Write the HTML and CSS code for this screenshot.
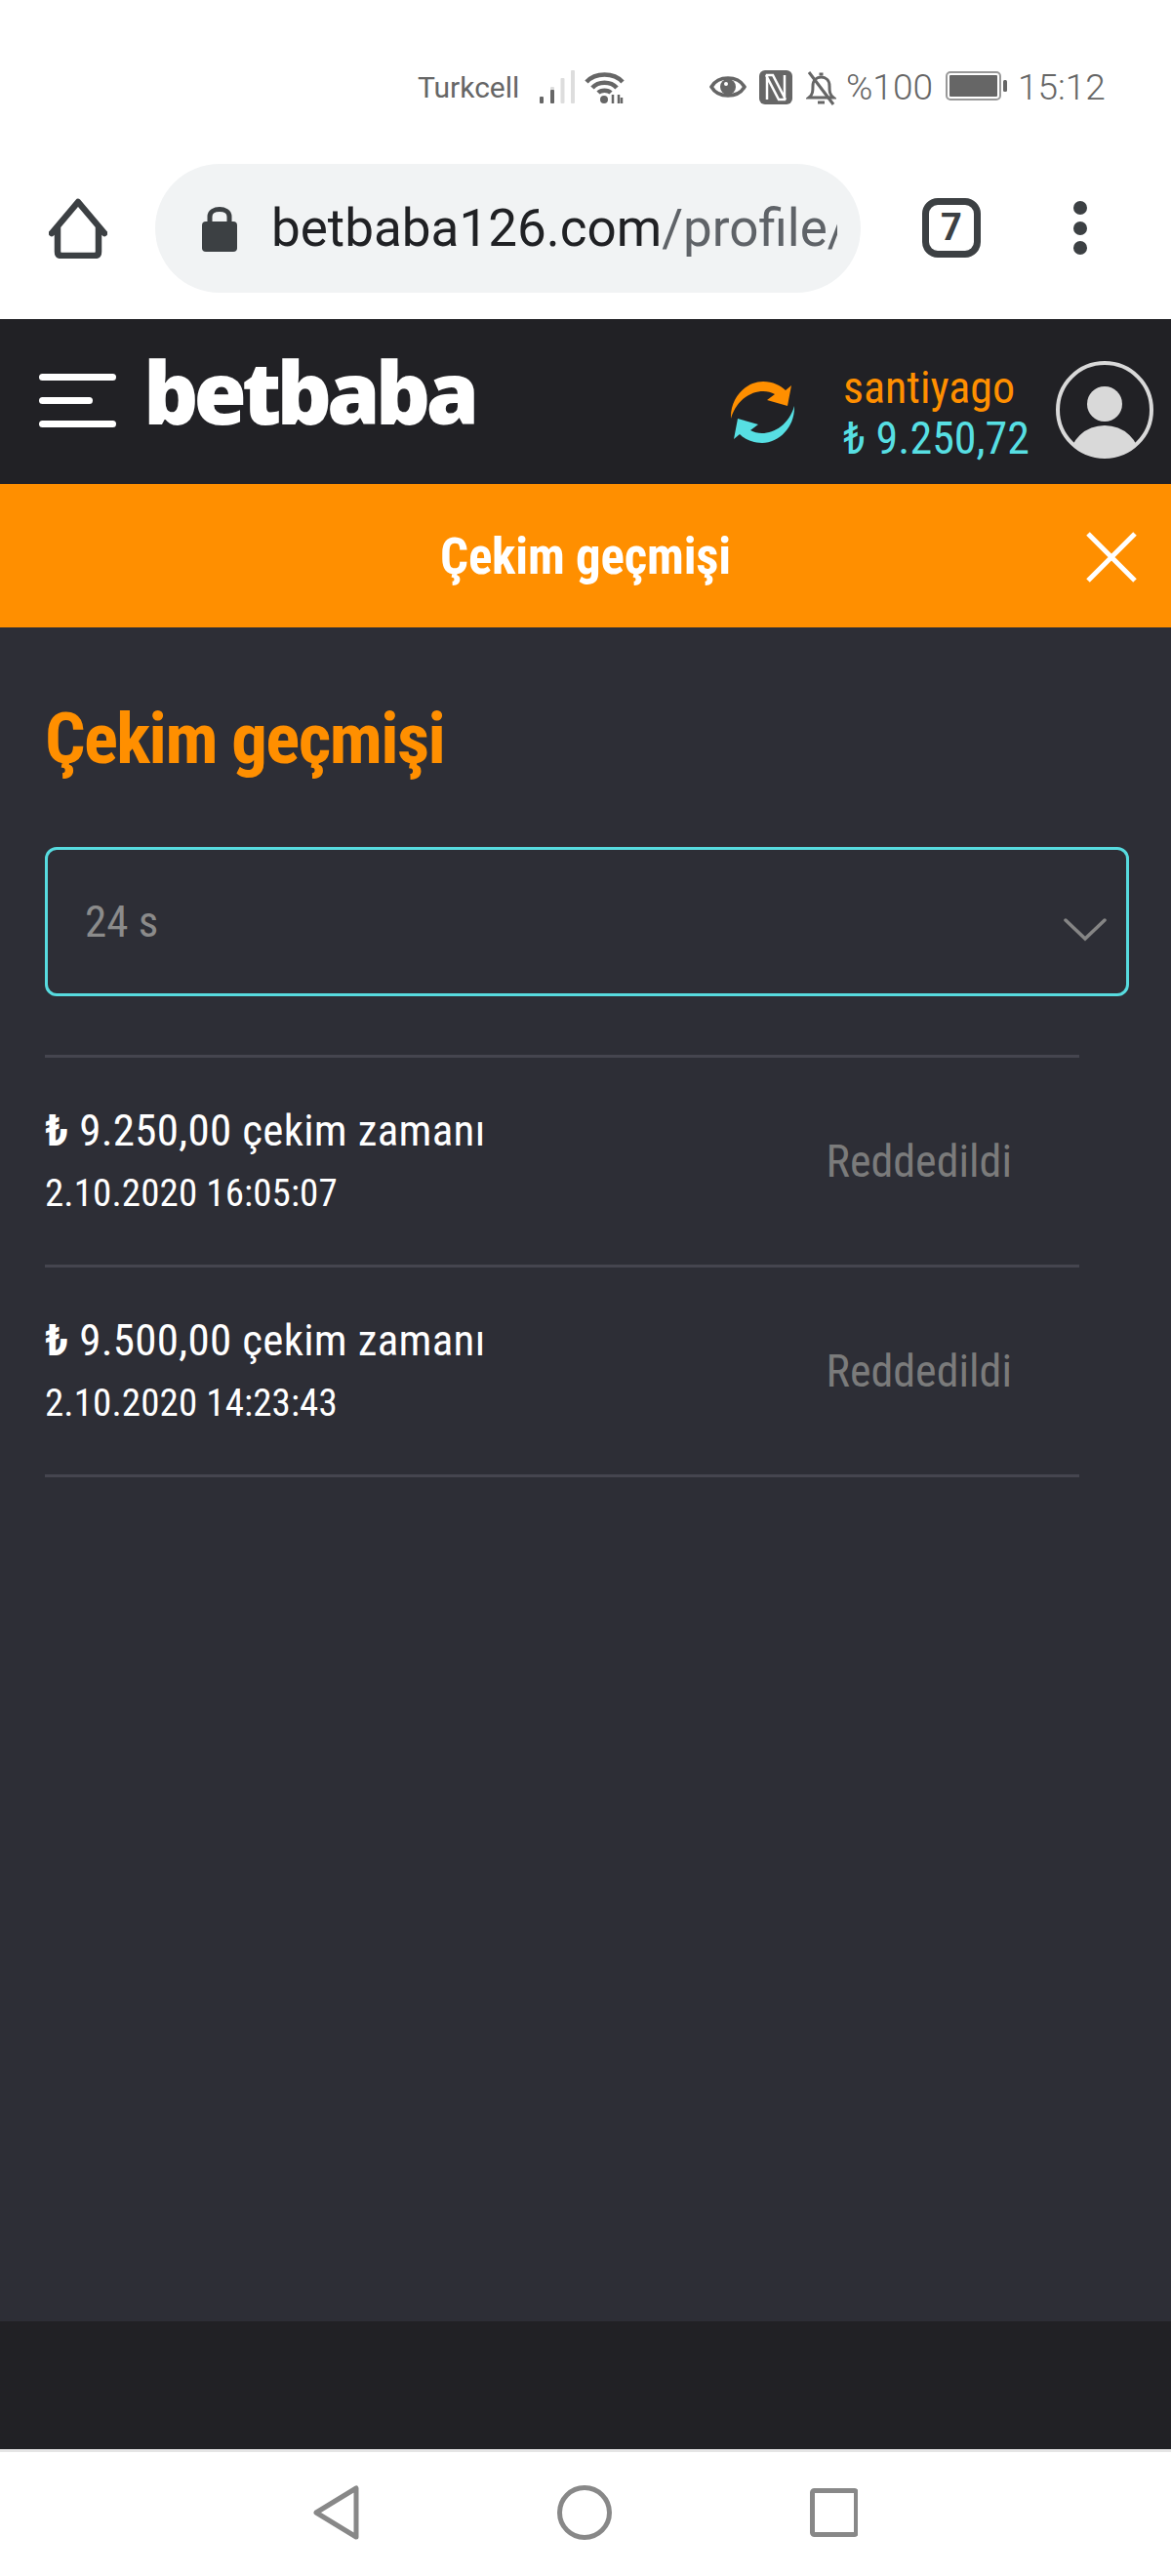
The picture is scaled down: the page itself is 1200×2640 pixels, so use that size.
FILE: index.html
```html
<!DOCTYPE html>
<html lang="en">
<head>
    <meta charset="UTF-8">
    <title>Çekim geçmişi</title>
    <link rel="stylesheet" href="styles.css">
</head>
<body>
    <div class="status-bar">
        <span class="carrier">Turkcell</span>
        <svg class="ic-signal" viewBox="0 0 36 34"><g fill="#ddd"><rect x="11" y="17" width="4" height="17" rx="1"/><rect x="21.500" y="8" width="4" height="26" rx="1"/><rect x="32" y="0" width="4" height="34" rx="1"/></g><rect x="0" y="27" width="4" height="7" rx="1" fill="#666"/><rect x="11" y="20" width="4" height="14" rx="1" fill="#666"/></svg>
        <svg class="ic-wifi" viewBox="0 0 41 33"><g fill="none" stroke="#666" stroke-width="4.500"><path d="M2 11C11 1 30 1 39 11"/><path d="M8 17C14 10 27 10 33 17"/><path d="M14 22C17 19 24 19 27 22"/></g><circle cx="20" cy="29" r="4" fill="#666"/><path d="M29 33V24M35 33V24M38 33V27" stroke="#666" stroke-width="2.500"/></svg>
        <svg class="ic-eye" viewBox="0 0 38 30"><path d="M2 15C9 3 29 3 36 15C29 27 9 27 2 15Z" fill="none" stroke="#666" stroke-width="3.500"/><circle cx="19" cy="15" r="8" fill="#666"/><circle cx="17" cy="12" r="2" fill="#fff"/></svg>
        <svg class="ic-nfc" viewBox="0 0 34 35"><rect width="34" height="35" rx="6" fill="#666"/><path d="M8 30V5H14L27 30M26 5V30H20L7 5" fill="none" stroke="#fff" stroke-width="2.500"/></svg>
        <svg class="ic-bell" viewBox="0 0 31 36"><path d="M3 28C7 25 7 21 7 16C7 10 11 7 15.500 7C20 7 24 10 24 16C24 21 24 25 28 28Z" fill="none" stroke="#666" stroke-width="3"/><path d="M12 33H19" stroke="#666" stroke-width="3"/><path d="M13.500 4H17.500M3 2L28 35" stroke="#666" stroke-width="3"/></svg>
        <span class="status-text">%100</span>
        <svg class="ic-battery" viewBox="0 0 64 30"><rect x="1" y="1" width="55" height="28" rx="4" fill="none" stroke="#999" stroke-width="2"/><rect x="4" y="4" width="49" height="22" rx="1" fill="#666"/><rect x="59" y="9" width="4" height="12" rx="1.500" fill="#666"/></svg>
        <span class="status-text">15:12</span>
    </div>

    <div class="toolbar">
        <svg class="ic-home" viewBox="0 0 60 62"><path d="M3 36L30 4L57 36M9 30V55Q9 59 13 59H47Q51 59 51 55V30" fill="none" stroke="#3c4043" stroke-width="6.500" stroke-linecap="round" stroke-linejoin="round"/></svg>
        <div class="url-pill">
            <svg class="ic-lock" viewBox="0 0 36 48"><path d="M8 20V12C8 2 28 2 28 12V20" fill="none" stroke="#3c4043" stroke-width="5"/><rect y="17" width="36" height="31" rx="4" fill="#3c4043"/></svg>
            <div class="url"><span class="url-host">betbaba126.com</span><span class="url-path">/profile/</span></div>
        </div>
        <div class="tab-count">7</div>
        <div class="dots"><i></i><i></i><i></i></div>
    </div>

    <header class="site-header">
        <div class="burger"><i></i><i class="short"></i><i></i></div>
        <div class="logo">betbaba</div>
        <svg class="ic-sync" viewBox="0 0 68 66">
            <path d="M1 39C0 18 16 1 34 1C44 1 52 5 57 10L63 5L59 26L38 20L46 14C32 6 8 14 1 39Z" fill="#ff8f00"/>
            <path d="M66 26C67 47 51 64 33 64C23 64 15 60 10 55L4 60L8 39L29 45L21 51C35 59 59 51 66 26Z" fill="#57dfe3"/>
        </svg>
        <div class="account">
            <div class="username">santiyago</div>
            <div class="balance">₺ 9.250,72</div>
        </div>
        <svg class="ic-avatar" viewBox="0 0 100 100"><defs><clipPath id="avatar-clip"><circle cx="50" cy="50" r="48"/></clipPath></defs><circle cx="50" cy="50" r="48" fill="none" stroke="#d9d9d9" stroke-width="4"/><circle cx="50" cy="44" r="18" fill="#d9d9d9"/><ellipse cx="50" cy="100" rx="36" ry="34" fill="#d9d9d9" clip-path="url(#avatar-clip)"/></svg>
    </header>

    <div class="title-bar">
        <span class="title-bar-text">Çekim geçmişi</span>
        <svg class="ic-close" viewBox="0 0 52 52"><path d="M2 2L50 50M50 2L2 50" stroke="#fff" stroke-width="5"/></svg>
    </div>

    <main class="content">
        <h1 class="page-title">Çekim geçmişi</h1>
        <div class="select">
            <span class="select-value">24 s</span>
            <svg class="ic-chevron" viewBox="0 0 44 24"><path d="M2 2L22 21L42 2" fill="none" stroke="#858585" stroke-width="3.500" stroke-linecap="round"/></svg>
        </div>
        <ul class="history">
            <li class="history-row">
                <div class="history-info">
                    <div class="history-amount"><b>₺</b> 9.250,00 çekim zamanı</div>
                    <div class="history-date">2.10.2020 16:05:07</div>
                </div>
                <div class="history-status">Reddedildi</div>
            </li>
            <li class="history-row">
                <div class="history-info">
                    <div class="history-amount"><b>₺</b> 9.500,00 çekim zamanı</div>
                    <div class="history-date">2.10.2020 14:23:43</div>
                </div>
                <div class="history-status">Reddedildi</div>
            </li>
        </ul>
    </main>

    <footer class="site-footer"></footer>

    <nav class="nav-bar">
        <svg class="ic-nav" viewBox="0 0 56 56"><path d="M5 28L46 3V53Z" fill="none" stroke="#888" stroke-width="5" stroke-linejoin="round"/></svg>
        <svg class="ic-nav" viewBox="0 0 56 56"><circle cx="28" cy="28" r="25.500" fill="none" stroke="#888" stroke-width="5"/></svg>
        <svg class="ic-nav" viewBox="0 0 56 56"><rect x="9.500" y="5.500" width="45" height="45" rx="2" fill="none" stroke="#888" stroke-width="5"/></svg>
    </nav>
</body>
</html>
```

FILE: styles.css
```css
* {
    box-sizing: border-box;
}
html, body {
    margin: 0;
    padding: 0;
}
body {
    width: 1200px;
    height: 2640px;
    display: flex;
    flex-direction: column;
    background: #fff;
    font-family: Roboto, "Liberation Sans", sans-serif;
    overflow: hidden;
}

/* phone status bar */
.status-bar {
    height: 168px;
    padding: 72px 0 0 428px;
    display: flex;
    align-items: flex-start;
    color: #666;
}
.carrier {
    width: 125px;
    font-size: 30px;
    font-stretch: 90%;
    line-height: 36px;
    white-space: nowrap;
}
.ic-signal { width: 36px; height: 34px; margin-right: 10px; }
.ic-wifi { width: 41px; height: 33px; margin: 1px 87px 0 0; }
.ic-eye { width: 38px; height: 30px; margin: 2px 13px 0 0; }
.ic-nfc { width: 34px; height: 35px; margin-right: 14px; }
.ic-bell { width: 31px; height: 36px; margin-right: 10px; }
.status-text {
    font-size: 37px;
    font-weight: 300;
    line-height: 36px;
    white-space: nowrap;
}
.ic-battery { width: 64px; height: 30px; margin: 1px 10px 0 13px; }

/* browser toolbar */
.toolbar {
    height: 159px;
    display: flex;
    align-items: flex-start;
    padding-left: 50px;
}
.ic-home { width: 60px; height: 62px; margin: 35px 49px 0 0; }
.url-pill {
    width: 723px;
    height: 132px;
    border-radius: 66px;
    background: #f1f3f4;
    padding-left: 48px;
    display: flex;
    align-items: center;
}
.ic-lock { width: 36px; height: 48px; margin-right: 35px; flex-shrink: 0; }
.url {
    width: 580px;
    font-size: 53px;
    white-space: nowrap;
    overflow: hidden;
    color: #202124;
}
.url-path { color: #5f6368; }
.tab-count {
    width: 60px;
    height: 61px;
    margin: 35px 0 0 63px;
    border: 7px solid #3c4043;
    border-radius: 16px;
    color: #3c4043;
    font-size: 38px;
    font-weight: 700;
    line-height: 47px;
    text-align: center;
}
.dots {
    margin: 38px 0 0 95px;
    display: flex;
    flex-direction: column;
    gap: 6.5px;
}
.dots i {
    width: 14px;
    height: 14px;
    border-radius: 50%;
    background: #3c4043;
}

/* site header */
.site-header {
    height: 169px;
    background: #212125;
    display: flex;
    align-items: flex-start;
    padding-left: 40px;
}
.burger {
    width: 79px;
    margin-top: 56px;
    display: flex;
    flex-direction: column;
    gap: 17px;
}
.burger i {
    height: 7px;
    border-radius: 4px;
    background: #fff;
}
.burger i.short { width: 55px; }
.logo {
    width: 595px;
    margin: 24px 0 0 34px;
    color: #fff;
    font-family: "Noto Sans", sans-serif;
    font-size: 88px;
    font-weight: 900;
    line-height: 100px;
    letter-spacing: -5px;
    text-indent: -6px;
}
.ic-sync { width: 68px; height: 66px; margin: 63px 48px 0 0; }
.account {
    width: 218px;
    margin-top: 44px;
    font-size: 46px;
    line-height: 52px;
    font-stretch: 75%;
    white-space: nowrap;
}
.username { color: #ff8f00; }
.balance { color: #57dfe3; }
.ic-avatar { width: 100px; height: 100px; margin-top: 43px; }

/* orange title */
.title-bar {
    height: 147px;
    padding-top: 2px;
    background: #ff8f00;
    display: flex;
    align-items: center;
    justify-content: center;
    position: relative;
}
.title-bar-text {
    color: #fff;
    font-size: 51px;
    font-weight: 700;
    font-stretch: 75%;
    letter-spacing: -0.2px;
}
.ic-close {
    position: absolute;
    right: 35px;
    top: 49px;
    width: 52px;
    height: 52px;
}

/* main content */
.content {
    height: 1736px;
    background: #2d2e36;
    padding: 72px 43px 0 46px;
}
.page-title {
    margin: 0 0 68px;
    color: #ff8f00;
    font-size: 73px;
    font-weight: 700;
    font-stretch: 75%;
    letter-spacing: -1.6px;
    line-height: 85px;
}
.select {
    height: 153px;
    border: 3px solid #57dbdf;
    border-radius: 12px;
    padding: 0 20px 0 38px;
    display: flex;
    align-items: center;
    justify-content: space-between;
}
.select-value {
    color: #8b8b8b;
    font-size: 45px;
    font-stretch: 75%;
}
.ic-chevron { width: 44px; height: 24px; margin-top: 17px; }
.history {
    list-style: none;
    margin: 60px 0 0;
    padding: 0;
    width: 1060px;
    border-top: 3px solid #45454f;
}
.history-row {
    height: 215px;
    border-bottom: 3px solid #45454f;
    display: flex;
    align-items: center;
    justify-content: space-between;
    padding-right: 69px;
}
.history-info {
    margin-top: 2px;
}
.history-amount {
    color: #fff;
    font-size: 45px;
    font-stretch: 75%;
    letter-spacing: 0.3px;
    line-height: 65px;
}
.history-date {
    color: #fff;
    font-size: 39px;
    font-stretch: 75%;
    letter-spacing: 0.1px;
    line-height: 65px;
}
.history-status {
    color: #7b7b7b;
    font-size: 46px;
    font-stretch: 75%;
}

/* footer and phone nav */
.site-footer {
    height: 131px;
    background: #212125;
}
.nav-bar {
    flex: 1;
    border-top: 3px solid #e5e5e5;
    display: flex;
    gap: 196px;
    padding: 34px 0 0 319px;
}
.ic-nav { width: 56px; height: 56px; }
```
